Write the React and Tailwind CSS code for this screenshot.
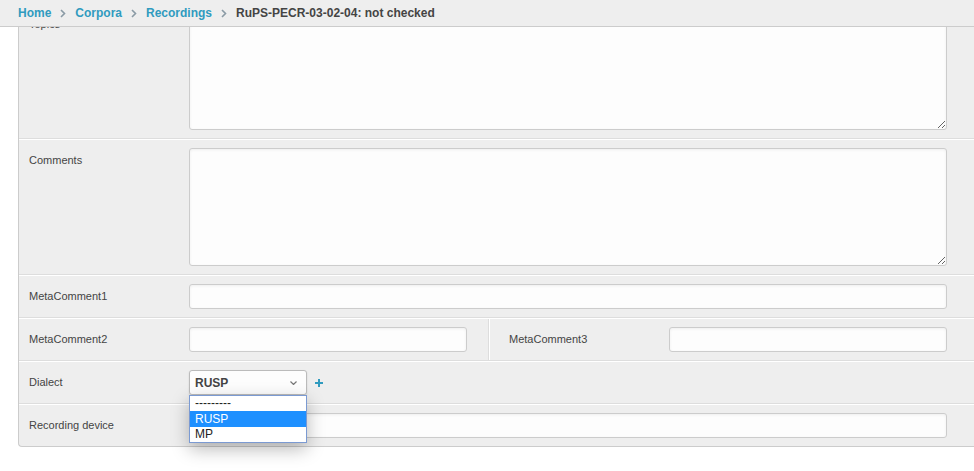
import React from "react";

const Chevron = () => (
  <span className="px-[9px] flex items-center">
    <svg width="6" height="9" viewBox="0 0 6 9">
      <path d="M1 1l3.5 3.5L1 8" fill="none" stroke="#8a9aa5" strokeWidth="1.6" />
    </svg>
  </span>
);

const inputCls =
  "h-[25px] bg-[#fdfdfd] border border-[#cccccc] rounded-[3px] shadow-[inset_0_1px_3px_0_#eeeeee] outline-none";

const Row = ({ label, children, last }) => (
  <div
    className={`flex border-t border-white ${
      last ? "" : "border-b border-b-[#dddddd]"
    } py-[8px] pl-[10px]`}
  >
    <div className="w-[160px] shrink-0 text-[11px] leading-[25px] text-[#444]">{label}</div>
    <div className="flex items-start">{children}</div>
  </div>
);

export default function App() {
  const breadcrumbs = ["Home", "Corpora", "Recordings"];

  return (
    <div
      className="relative w-full h-[471px] overflow-hidden bg-white"
      style={{ fontFamily: '"Liberation Sans", Arial, sans-serif' }}
    >
      {/* breadcrumb bar */}
      <div className="absolute top-0 left-0 right-0 z-10 h-[27px] bg-[#eeeeee] border-b border-[#cccccc] flex items-center pl-[18px] text-[12px] font-bold">
        {breadcrumbs.map((b) => (
          <React.Fragment key={b}>
            <a className="text-[#309bbf]">{b}</a>
            <Chevron />
          </React.Fragment>
        ))}
        <span className="text-[#444]">RuPS-PECR-03-02-04: not checked</span>
      </div>

      <div className="pt-[3px]">
        <div className="ml-[18px] w-[990px] bg-[#eeeeee] border-l border-b border-[#cccccc] rounded-bl-[4px]">
          <Row label="Topics">
            <textarea className={`${inputCls} w-[758px] h-[118px]`} />
          </Row>
          <Row label="Comments">
            <textarea className={`${inputCls} w-[758px] h-[118px]`} />
          </Row>
          <Row label="MetaComment1">
            <input className={`${inputCls} w-[758px]`} />
          </Row>

          {/* two-cell row */}
          <div className="flex border-t border-white border-b border-b-[#dddddd]">
            <div className="flex py-[8px] pl-[10px] pr-[21px]">
              <div className="w-[160px] text-[11px] leading-[25px] text-[#444]">MetaComment2</div>
              <input className={`${inputCls} w-[278px]`} />
            </div>
            <div className="flex py-[8px] pl-[20px] border-l border-[#dddddd] shadow-[inset_1px_0_0_#ffffff]">
              <div className="w-[160px] text-[11px] leading-[25px] text-[#444]">MetaComment3</div>
              <input className={`${inputCls} w-[278px]`} />
            </div>
          </div>

          <Row label="Dialect">
            <div className="relative">
              <div className="w-[118px] h-[25px] bg-[#fdfdfd] border border-[#bbbbbb] rounded-[3px] shadow-[0_1px_2px_rgba(0,0,0,0.12)] flex items-center justify-between pl-[5px] pr-[9px] text-[12px] font-bold text-[#444]">
                <span>RUSP</span>
                <svg width="7" height="4" viewBox="0 0 7 4">
                  <path d="M0.5 0.5l3 3 3-3" fill="none" stroke="#777" strokeWidth="1.2" />
                </svg>
              </div>
              {/* open dropdown list */}
              <div className="absolute left-0 top-[25px] z-20 w-[118px] bg-white border border-[#7b9ad2] shadow-[0_6px_18px_rgba(0,0,0,0.28)] text-[12px] text-[#222]">
                <div className="pl-[5px] leading-[14px] h-[15px]">---------</div>
                <div className="pl-[5px] leading-[16px] h-[16px] bg-[#1e90ff] text-white">RUSP</div>
                <div className="pl-[5px] leading-[15px] h-[15px]">MP</div>
              </div>
            </div>
            <span className="ml-[8px] mt-[9px]">
              <svg width="8" height="8" viewBox="0 0 8 8">
                <path d="M4 0v8M0 4h8" stroke="#309bbf" strokeWidth="2" />
              </svg>
            </span>
          </Row>
          <Row label="Recording device" last>
            <input className={`${inputCls} w-[758px]`} />
          </Row>
        </div>
      </div>
    </div>
  );
}
